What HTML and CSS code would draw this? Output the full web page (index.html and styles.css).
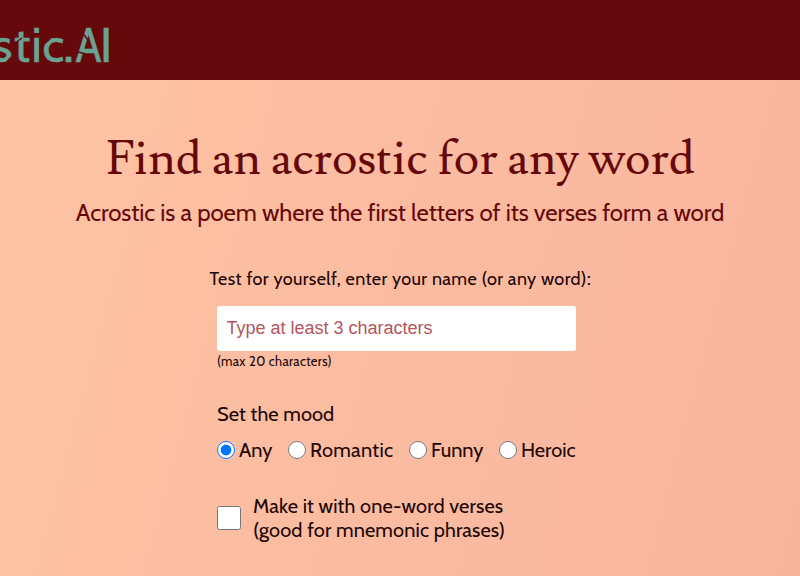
FILE: index.html
```
<!DOCTYPE html>
<html lang="en">
<head>
<meta charset="utf-8">
<title>Acrostic.AI</title>
<link rel="stylesheet" href="styles.css">
</head>
<body>
<header class="bar"><svg class="logo" width="120" height="80" viewBox="0 0 120 80">
<g class="logo-text"><text y="61.5" x="-7.5 14 31.5 42.5 63.5">stic.</text><text y="61.5" x="75.5" textLength="26" lengthAdjust="spacingAndGlyphs">A</text><text y="61.5" x="100">I</text></g>
<path class="cuts" d="M6 63l5-6M15 43l7-5M44 44l6-5M82 32l6.5 9M78 52l8 2"/>
</svg></header>
<main class="page">
<h1>Find an acrostic for any word</h1>
<p class="subtitle">Acrostic is a poem where the first letters of its verses form a word</p>
<form class="form">
<label class="prompt" for="word">Test for yourself, enter your name (or any word):</label>
<input class="word" id="word" type="text" maxlength="20" placeholder="Type at least 3 characters">
<small class="hint">(max 20 characters)</small>
<p class="mood">Set the mood</p>
<div class="moods">
<label class="any"><input type="radio" name="mood" checked><span>Any</span></label>
<label class="romantic"><input type="radio" name="mood"><span>Romantic</span></label>
<label class="funny"><input type="radio" name="mood"><span>Funny</span></label>
<label class="heroic"><input type="radio" name="mood"><span>Heroic</span></label>
</div>
<label class="single"><input type="checkbox"><span>Make it with one-word verses<br>(good for mnemonic phrases)</span></label>
</form>
</main>
</body>
</html>
```
FILE: styles.css
```
* { box-sizing: border-box; }
body { margin: 0; height: 576px; overflow: hidden; color: #200505; font-family: Cabin, Lato, sans-serif; background: linear-gradient(105deg, #ffc4a4 0%, #fbbca1 48%, #f8b59e 100%); }
.bar { height: 80px; background: #66090d; }
.logo { display: block; }
.logo-text { fill: #6ba392; stroke: #6ba392; stroke-width: .4; font: 48px Cabin, Lato, sans-serif; }
.cuts { fill: none; stroke: #66090d; stroke-width: 1.4; }
.page { display: flex; flex-direction: column; align-items: center; padding-top: 48px; }
h1 { margin: 0 0 0 1px; height: 62px; white-space: nowrap; color: #66080a; font: 400 48px/62px Lusitana, "Liberation Serif", serif; letter-spacing: .1px; }
.subtitle { margin: 8px 0 0; height: 30px; line-height: 30px; font-size: 24px; letter-spacing: -.09px; white-space: nowrap; color: #66080a; }
.form { display: flex; flex-direction: column; align-items: flex-start; width: 359px; margin: 40px 7px 0 0; }
.prompt { height: 22px; margin-left: -7.5px; line-height: 22px; font-size: 18px; letter-spacing: .39px; white-space: nowrap; }
.word { width: 359px; height: 45px; margin: 16px 0 0; padding: 0 9.5px; border: 0; border-radius: 3px; background: #fff; font: 18px "Liberation Sans", sans-serif; }
.word::placeholder { color: #b45560; opacity: 1; }
.hint { font-size: 13px; line-height: 20px; letter-spacing: .32px; white-space: nowrap; }
.mood { margin: 31px 0 0; font-size: 20px; line-height: 24px; letter-spacing: .1px; }
.moods { display: flex; height: 24px; margin-top: 12px; font-size: 20px; line-height: 24px; white-space: nowrap; }
.moods label { display: flex; align-items: center; }
.moods input { width: 18px; height: 18px; margin: 0 4px 0 0; flex: none; }
.any { width: 71px; }
.romantic { width: 121px; letter-spacing: .3px; }
.funny { width: 90px; }
.single { display: flex; align-items: center; margin-top: 32px; font-size: 20px; line-height: 24px; letter-spacing: .14px; white-space: nowrap; }
.single input { width: 24px; height: 24px; margin: 0 12px 0 0; }
```
